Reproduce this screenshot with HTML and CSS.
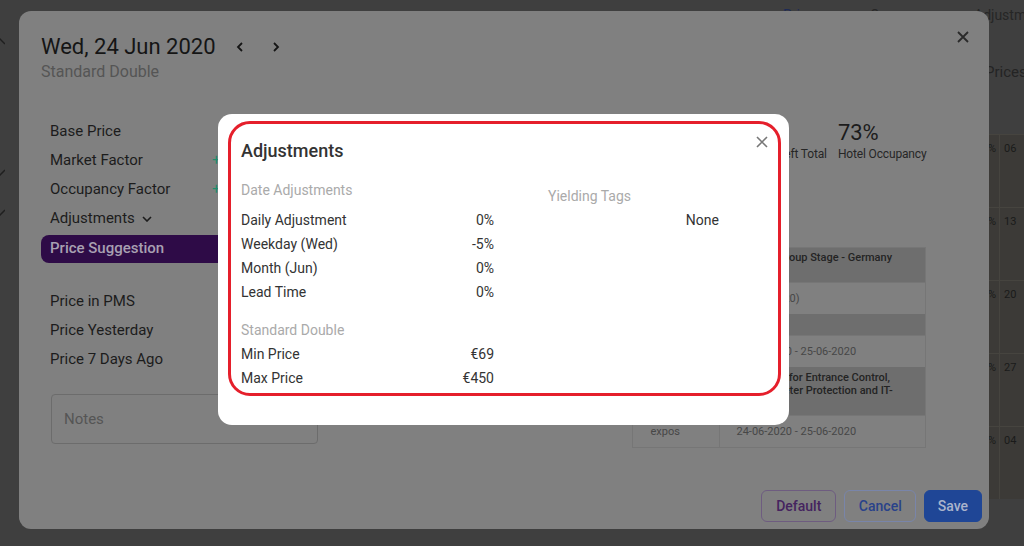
FILE: index.html
```html
<!DOCTYPE html>
<html lang="en">
<head>
<meta charset="utf-8">
<title>Adjustments</title>
<link rel="stylesheet" href="styles.css">
</head>
<body>
<div class="app">
  <div class="app-head">
    <span class="hcol hlink">Prices</span>
    <span class="hcol hocc">Occupancy</span>
    <span class="hcol">Adjustments</span>
  </div>
  <div class="app-body">
    <div class="tree">
      <svg class="tree-ico t1" width="10" height="10" viewBox="0 0 10 10"><path d="M0 7L5 2L10 7" stroke="#1f1f1f" stroke-width="1.5" fill="none"/></svg>
      <svg class="tree-ico t2" width="10" height="10" viewBox="0 0 10 10"><path d="M0 3L5 8L10 3" stroke="#1f1f1f" stroke-width="1.5" fill="none"/></svg>
      <svg class="tree-ico t3" width="10" height="10" viewBox="0 0 10 10"><path d="M0 3L5 8L10 3" stroke="#1f1f1f" stroke-width="1.5" fill="none"/></svg>
    </div>
    <div class="cal">
      <div class="cal-title">Prices</div>
      <div class="cal-cells">
        <div class="cal-cell"><span class="pct">-5%</span><span class="day">06</span></div>
        <div class="cal-cell"><span class="pct">-5%</span><span class="day">13</span></div>
        <div class="cal-cell"><span class="pct">-5%</span><span class="day">20</span></div>
        <div class="cal-cell"><span class="pct">-5%</span><span class="day">27</span></div>
        <div class="cal-cell"><span class="pct">-5%</span><span class="day">04</span></div>
      </div>
    </div>
  </div>
</div>

<div class="dialog">
  <button class="dlg-close" aria-label="Close">
    <svg width="12" height="12" viewBox="0 0 12 12"><path d="M1 1L11 11M11 1L1 11" stroke="#2a2a2a" stroke-width="1.8" fill="none"/></svg>
  </button>
  <div class="dlg-head">
    <h1 class="dlg-title">Wed, 24 Jun 2020</h1>
    <button class="nav nav-first" aria-label="Previous day">
      <svg width="8" height="10" viewBox="0 0 8 10"><path d="M6 1L2 5L6 9" stroke="#151515" stroke-width="1.8" fill="none"/></svg>
    </button>
    <button class="nav" aria-label="Next day">
      <svg width="8" height="10" viewBox="0 0 8 10"><path d="M2 1L6 5L2 9" stroke="#151515" stroke-width="1.8" fill="none"/></svg>
    </button>
  </div>
  <div class="dlg-sub">Standard Double</div>

  <div class="dlg-body">
    <div class="factors">
      <div class="frow"><span>Base Price</span><span class="fval right">€100</span></div>
      <div class="frow"><span>Market Factor</span><span class="fval green">+3%</span></div>
      <div class="frow"><span>Occupancy Factor</span><span class="fval green">+8%</span></div>
      <div class="frow"><span class="adj-label">Adjustments
        <svg class="chev-down" width="10" height="6" viewBox="0 0 10 6"><path d="M1 1L5 5L9 1" stroke="#1c1c1c" stroke-width="1.6" fill="none"/></svg></span><span class="fval right">-5%</span></div>
      <div class="frow pill"><span>Price Suggestion</span><span class="fval right">€101</span></div>

      <div class="group2">
        <div class="frow"><span>Price in PMS</span><span class="fval right">€99</span></div>
        <div class="frow"><span>Price Yesterday</span><span class="fval right">€99</span></div>
        <div class="frow"><span>Price 7 Days Ago</span><span class="fval right">€95</span></div>
      </div>

      <div class="notes">Notes</div>
    </div>

    <div class="spacer"></div>

    <div class="side">
      <div class="stats">
        <div class="stat">
          <div class="stat-label">Left Total</div>
        </div>
        <div class="stat">
          <div class="stat-value">73%</div>
          <div class="stat-label">Hotel Occupancy</div>
        </div>
      </div>

      <div class="events">
        <div class="ev-title">UEFA Euro Championship Group Stage - Germany<br>vs. Hungary</div>
        <div class="ev-row"><span class="ev-type">sports</span><span class="ev-date">(24-06-2020)</span></div>
        <div class="ev-title">Fête de la Musique</div>
        <div class="ev-row"><span class="ev-type">concerts</span><span class="ev-date">24-06-2020 - 25-06-2020</span></div>
        <div class="ev-title">The International Trade Fair for Entrance Control,<br>Security Technology, Perimeter Protection and IT-<br>Security</div>
        <div class="ev-row"><span class="ev-type">expos</span><span class="ev-date">24-06-2020 - 25-06-2020</span></div>
      </div>
    </div>
  </div>

  <div class="dlg-foot">
    <button class="btn btn-default">Default</button>
    <button class="btn btn-cancel">Cancel</button>
    <button class="btn btn-save">Save</button>
  </div>
</div>

<div class="modal">
  <button class="modal-close" aria-label="Close">
    <svg width="12" height="12" viewBox="0 0 12 12"><path d="M1 1L11 11M11 1L1 11" stroke="#777" stroke-width="1.6" fill="none"/></svg>
  </button>
  <div class="annot">
    <h2 class="modal-title">Adjustments</h2>
    <div class="adj-grid">
      <div class="adj-col">
        <div class="adj-h first">Date Adjustments</div>
        <div class="adj-row"><span>Daily Adjustment</span><span>0%</span></div>
        <div class="adj-row"><span>Weekday (Wed)</span><span>-5%</span></div>
        <div class="adj-row"><span>Month (Jun)</span><span>0%</span></div>
        <div class="adj-row"><span>Lead Time</span><span>0%</span></div>
        <div class="adj-h second">Standard Double</div>
        <div class="adj-row"><span>Min Price</span><span>€69</span></div>
        <div class="adj-row"><span>Max Price</span><span>€450</span></div>
      </div>
      <div class="adj-col tags">
        <div class="adj-h">Yielding Tags</div>
        <div class="adj-row end"><span>None</span></div>
      </div>
    </div>
  </div>
</div>
</body>
</html>
```

FILE: styles.css
```css
* { box-sizing: border-box; }

html, body {
  margin: 0;
  padding: 0;
}

body {
  width: 1024px;
  height: 546px;
  overflow: hidden;
  background: #3f3f3f;
  font-family: Roboto, "Liberation Sans", sans-serif;
  color: #1c1c1c;
}

button {
  font-family: inherit;
  background: none;
  border: 0;
  padding: 0;
  cursor: pointer;
}

/* ---------- background page (dimmed twice) ---------- */
.app {
  width: 1024px;
  height: 546px;
  overflow: hidden;
}

.app-head {
  display: flex;
  padding: 5px 0 0 783px;
  font-size: 14px;
  line-height: 20px;
  color: #262626;
  white-space: nowrap;
}
.hcol { flex-shrink: 0; }
.hlink { width: 87px; color: #1d2a55; }
.hocc { width: 104px; }

.app-body {
  display: flex;
  justify-content: space-between;
}

.tree {
  display: flex;
  flex-direction: column;
  margin-left: -5px;
}
.tree-ico { display: block; }
.t1 { margin-top: 12px; }
.t2 { margin-top: 120px; }
.t3 { margin-top: 30px; }

.cal {
  width: 64px;
  flex-shrink: 0;
}
.cal-title {
  margin-top: 37px;
  padding-left: 25px;
  font-size: 15px;
  line-height: 20px;
  color: #242424;
  white-space: nowrap;
}
.cal-cells {
  margin-top: 52px;
  background: #3c3a37;
}
.cal-cell {
  display: grid;
  grid-template-columns: 39px 1fr;
  height: 73px;
  border-top: 1px solid #46443f;
  font-size: 11px;
  line-height: 13px;
  color: #1a1a1a;
}
.pct {
  text-align: right;
  padding: 7px 3px 0 0;
}
.day {
  border-left: 1px solid #46443f;
  padding: 7px 0 0 4px;
}

/* ---------- main dialog (dimmed) ---------- */
.dialog {
  position: fixed;
  left: 19px;
  top: 11px;
  width: 970px;
  height: 518px;
  background: #808080;
  border-radius: 12px;
  padding: 21.5px 7.5px 7.5px 22px;
  display: flex;
  flex-direction: column;
}

.dlg-close {
  position: absolute;
  right: 20px;
  top: 20px;
  width: 12px;
  height: 12px;
  display: flex;
}

.dlg-head {
  display: flex;
  align-items: center;
  height: 28px;
}
.dlg-title {
  margin: 0;
  font-size: 22px;
  line-height: 28px;
  font-weight: 400;
  color: #151515;
}
.nav {
  width: 20px;
  height: 20px;
  display: flex;
  align-items: center;
  justify-content: center;
  margin-left: 16px;
}
.nav-first { margin-left: 14px; }

.dlg-sub {
  margin-top: 1.5px;
  font-size: 16px;
  line-height: 20px;
  color: #555;
}

.dlg-body {
  display: grid;
  grid-template-columns: 277px 1fr 294px;
  margin-right: 56px;
}

.factors {
  margin-top: 35.3px;
}
.frow {
  display: grid;
  grid-template-columns: 162px 1fr;
  padding-left: 9px;
  font-size: 15px;
  line-height: 29px;
  color: #1c1c1c;
  white-space: nowrap;
}
.fval.green { color: #1e8c6c; }
.fval.right { text-align: right; padding-right: 10px; }
.adj-label {
  display: flex;
  align-items: center;
  gap: 7px;
}
.chev-down { margin-top: 1px; }

.frow.pill {
  margin-top: 2px;
  height: 28px;
  line-height: 26px;
  border-radius: 8px;
  background: #2e0b47;
  color: #a8a0b2;
  font-weight: 500;
}

.group2 { margin-top: 23.4px; }

.notes {
  margin: 20px 0 0 10px;
  width: 267px;
  height: 50px;
  border: 1px solid #6c6c6c;
  border-radius: 4px;
  padding-left: 12px;
  display: flex;
  align-items: center;
  font-size: 15px;
  color: #555;
}

.side { min-width: 0; }

.stats {
  margin-top: 38.4px;
  display: flex;
  justify-content: flex-end;
  align-items: flex-end;
  gap: 11px;
  margin-right: -1px;
}
.stat-value {
  font-size: 22px;
  line-height: 26px;
  color: #1c1c1c;
}
.stat-label {
  font-size: 12px;
  line-height: 16px;
  color: #262626;
  white-space: nowrap;
  letter-spacing: -0.15px;
}

.events {
  margin-top: 84.4px;
  border: 1px solid #767676;
  font-size: 11px;
  line-height: 13.5px;
}
.ev-title {
  background: #6e6e6e;
  padding: 3.5px 18px;
  font-weight: 500;
  color: #242424;
  white-space: nowrap;
  overflow: hidden;
}
.ev-row {
  display: grid;
  grid-template-columns: 86px 1fr;
  border-top: 1px solid #767676;
  color: #474747;
}
.ev-type { padding: 9px 18px; }
.ev-date {
  padding: 9px 17px;
  border-left: 1px solid #767676;
}

.dlg-foot {
  margin-top: auto;
  display: flex;
  justify-content: flex-end;
  gap: 8px;
}
.btn {
  height: 32px;
  padding: 0 14px;
  border: 1px solid;
  border-radius: 6px;
  font-size: 14px;
  font-weight: 500;
}
.btn-default { border-color: #6e5c80; color: #45245f; }
.btn-cancel { border-color: #7985aa; color: #29428a; padding: 0 13.5px; }
.btn-save { background: #1f4696; border-color: #1f4696; color: #aab4cc; padding: 0 12.5px; }

/* ---------- adjustments modal ---------- */
.modal {
  position: fixed;
  left: 218px;
  top: 114px;
  width: 571px;
  height: 311px;
  background: #fff;
  border-radius: 14px;
  padding: 7px 8px 29px 10px;
}

.modal-close {
  position: absolute;
  right: 21px;
  top: 22px;
  width: 12px;
  height: 12px;
  display: flex;
}

.annot {
  height: 100%;
  border: 3px solid #e51f2b;
  border-radius: 22px;
  padding: 14.5px 0 0 10px;
}

.modal-title {
  margin: 0;
  font-size: 18px;
  line-height: 24px;
  font-weight: 500;
  color: #333;
}

.adj-grid {
  margin-top: 15.8px;
  display: grid;
  grid-template-columns: 253px 171px;
  column-gap: 54px;
  align-items: start;
}

.adj-h {
  font-size: 14px;
  line-height: 24px;
  color: #aaa;
}
.adj-h.first { margin-bottom: 5.5px; }
.adj-h.second { margin-top: 14.2px; }

.adj-row {
  display: flex;
  justify-content: space-between;
  font-size: 14px;
  line-height: 24px;
  color: #333;
}
.adj-row.end { justify-content: flex-end; }

.tags { margin-top: 5.5px; }
```
